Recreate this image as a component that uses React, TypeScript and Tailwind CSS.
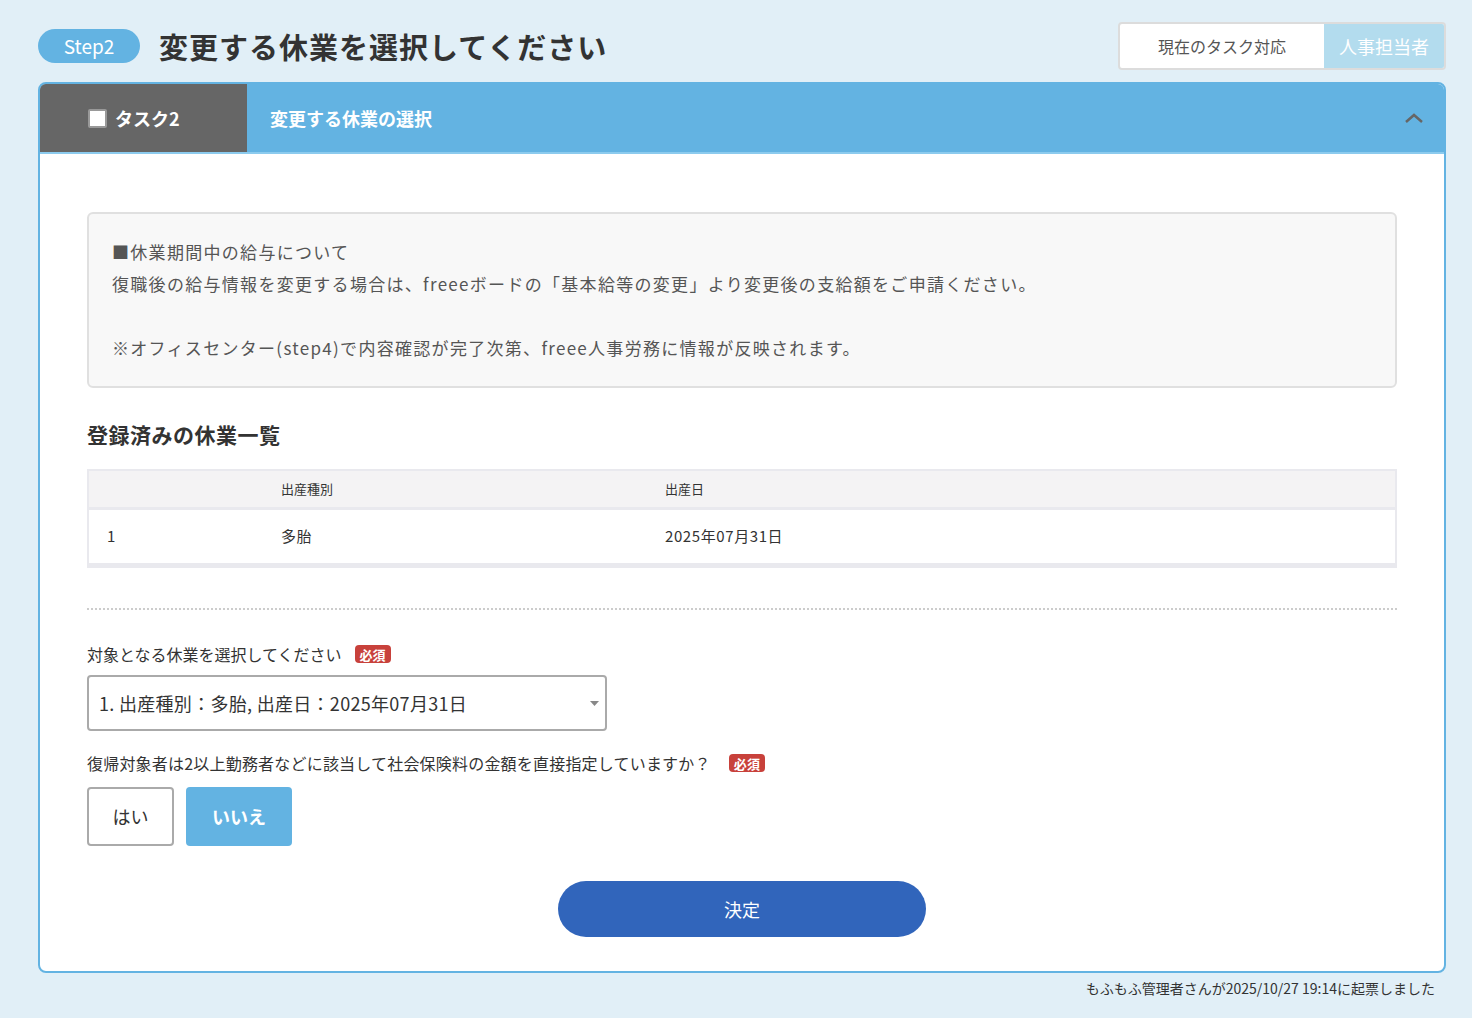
import React from "react";

const font = { fontFamily: '"Noto Sans CJK JP", "Noto Sans", sans-serif' };

function Badge() {
  return (
    <span className="inline-flex h-[18px] items-center rounded-[4px] bg-[#c8413b] px-[5px] text-[13px] font-bold leading-none text-white">
      必須
    </span>
  );
}

export default function App() {
  return (
    <div className="min-h-[1018px] w-full bg-[#e1eff7] text-[#333]" style={font}>
      <div className="pl-[38px] pr-[26px] pt-[22px]">
        {/* Top row */}
        <div className="flex h-[48px] items-start justify-between">
          <div className="flex items-center gap-[19px] pt-[7px]">
            <span className="flex h-[34px] w-[102px] items-center justify-center rounded-full bg-[#63b3e2] text-[19px] text-white">
              Step2
            </span>
            <h1 className="text-[29px] font-bold leading-none tracking-[1px] text-[#333]">
              変更する休業を選択してください
            </h1>
          </div>
          <div className="flex h-[48px] overflow-hidden rounded-[4px] border-2 border-[#dcdcdc] bg-white">
            <div className="flex w-[204px] items-center justify-center text-[16px] text-[#555]">
              現在のタスク対応
            </div>
            <div className="flex w-[120px] items-center justify-center bg-[#b3dcee] text-[18px] text-white">
              人事担当者
            </div>
          </div>
        </div>

        {/* Card */}
        <div className="mt-[12px] overflow-hidden rounded-[8px] border-2 border-[#63b3e2] bg-white">
          <div className="flex h-[70px] border-b-2 border-[#8ccbee] bg-[#63b3e2]">
            <div className="flex w-[207px] items-center gap-[8px] bg-[#666666] pl-[48px]">
              <span className="h-[19px] w-[19px] rounded-[2px] border-2 border-[#999] bg-white" />
              <span className="text-[18px] font-bold text-white">タスク2</span>
            </div>
            <div className="flex flex-1 items-center justify-between pl-[23px] pr-[20px]">
              <span className="text-[18px] font-bold text-white">変更する休業の選択</span>
              <svg width="20" height="12" viewBox="0 0 20 12" fill="none">
                <path d="M2 10 L10 3 L18 10" stroke="#666" strokeWidth="2.5" />
              </svg>
            </div>
          </div>

          <div className="px-[47px] pb-[34px] pt-[58px]">
            {/* Info box */}
            <div className="rounded-[6px] border-2 border-[#e0e0e0] bg-[#f8f8f8] px-[23px] py-[22px] text-[17px] leading-[32px] tracking-[1.3px] text-[#555]">
              <p>■休業期間中の給与について</p>
              <p>復職後の給与情報を変更する場合は、freeeボードの「基本給等の変更」より変更後の支給額をご申請ください。</p>
              <p>&nbsp;</p>
              <p>※オフィスセンター(step4)で内容確認が完了次第、freee人事労務に情報が反映されます。</p>
            </div>

            <h2 className="mt-[32px] text-[21px] font-bold leading-[28px] tracking-[0.5px] text-[#333]">登録済みの休業一覧</h2>

            <div className="mt-[21px] border-[2px] border-[#e9e9ee]">
              <div className="flex h-[39px] items-center border-b-[3px] border-[#e9e9ee] bg-[#f4f3f4] text-[13px]">
                <div className="w-[192px] pl-[18px]"></div>
                <div className="w-[384px]">出産種別</div>
                <div className="flex-1">出産日</div>
              </div>
              <div className="flex h-[56px] items-center border-b-[3px] border-[#e9e9ee] text-[15px] tracking-[0.6px]">
                <div className="w-[192px] pl-[18px]">1</div>
                <div className="w-[384px]">多胎</div>
                <div className="flex-1">2025年07月31日</div>
              </div>
            </div>

            <div className="mt-[40px] border-t-2 border-dotted border-[#cccccc]" />

            <div className="mt-[32px] flex items-center gap-[13px] text-[16px]">
              <span>対象となる休業を選択してください</span>
              <Badge />
            </div>

            <div className="mt-[9px] flex h-[56px] w-[520px] items-center justify-between rounded-[4px] border-2 border-[#aaaaaa] pl-[10px] pr-[6px] text-[18px] tracking-[0.3px]">
              <span>1. 出産種別：多胎, 出産日：2025年07月31日</span>
              <svg width="9" height="5" viewBox="0 0 9 5">
                <path d="M0 0 L9 0 L4.5 5 Z" fill="#888" />
              </svg>
            </div>

            <div className="mt-[20px] flex items-center gap-[18px] text-[16px] tracking-[0.2px]">
              <span>復帰対象者は2以上勤務者などに該当して社会保険料の金額を直接指定していますか？</span>
              <Badge />
            </div>

            <div className="mt-[12px] flex gap-[12px]">
              <button className="flex h-[59px] w-[87px] items-center justify-center rounded-[4px] border-2 border-[#aaaaaa] bg-white text-[18px] text-[#333]">
                はい
              </button>
              <button className="flex h-[59px] w-[106px] items-center justify-center rounded-[4px] bg-[#63b3e2] text-[18px] font-bold text-white">
                いいえ
              </button>
            </div>

            <div className="mt-[35px] flex justify-center">
              <button className="flex h-[56px] w-[368px] items-center justify-center rounded-full bg-[#3165bb] text-[18px] text-white">
                決定
              </button>
            </div>
          </div>
        </div>

        <div className="mt-[5px] pr-[11px] text-right text-[14px] text-[#333]">
          もふもふ管理者さんが2025/10/27 19:14に起票しました
        </div>
      </div>
    </div>
  );
}
